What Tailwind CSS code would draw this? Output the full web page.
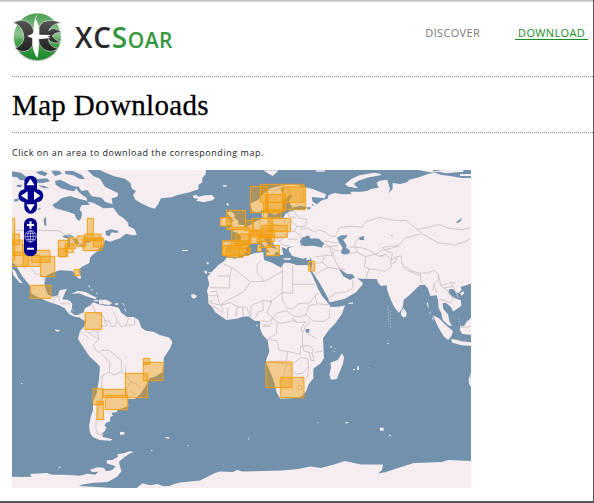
<!DOCTYPE html>
<html lang="en"><head><meta charset="utf-8"><title>XCSoar - Map Downloads</title>
<script src="https://cdn.jsdelivr.net/npm/@tailwindcss/browser@4"></script></head>
<body class="h-[503px] w-[594px] overflow-hidden bg-white">
<div class="flex h-[503px] w-[594px] flex-col border-r border-b-2 border-[#555] bg-white font-['Open_Sans',sans-serif]">
<div class="h-[2px] shrink-0 bg-linear-to-b from-[#bbb] to-[#ddd]"></div>
<header class="ml-3 flex h-[75px] shrink-0 items-start justify-between border-b border-dotted border-[#888] pr-[5px]">
<div class="flex pt-[10px]">
<svg class="h-[52px] w-[52px]" viewBox="12 12 156 156"><defs><linearGradient id="g" x2="0" y2="1"><stop stop-color="#4c9e50"/><stop offset=".45" stop-color="#8fc391"/><stop offset=".6" stop-color="#49a14e"/><stop offset="1" stop-color="#16862a"/></linearGradient><linearGradient id="k" x2="0" y2="1"><stop stop-color="#555"/><stop offset="1" stop-color="#202020"/></linearGradient></defs>
<ellipse cx="88" cy="90" rx="71" ry="70" fill="#bbb"/><circle cx="88" cy="86" r="70" fill="url(#g)"/>
<g fill="url(#k)" stroke="#d5e5d5" stroke-width="2"><path d="M16 44Q46 28 66 47Q75 56 78 72L79 97Q74 119 60 127Q41 136 21 121Q46 112 48 87Q45 53 16 44Z"/><path d="M91 75Q91 41 119 38Q143 35 158 45Q132 47 122 68Q137 53 161 73Q140 73 133 84Q140 96 158 102Q135 111 121 94Q125 118 150 121Q131 137 109 125Q91 112 91 95Z"/></g>
<path d="M89 17Q75 35 77 72L71 79L57 84L73 91Q70 124 88 151Q94 127 92 94L129 90L119 86L129 81L94 80Q96 52 83 34Z" fill="#fff"/></svg>
<div class="mt-[5px] ml-[11px] font-['Open_Sans'] text-[28px] leading-[40px] font-semibold tracking-[.8px] text-[#292929]">XC<span class="font-semibold tracking-[.5px] text-[#36963e]">S<span class="text-[21px]">OAR</span></span></div></div>
<nav class="flex gap-[35px] pt-[24px] text-[11px] leading-[13px] tracking-[.34px]"><a class="text-[#777]">DISCOVER</a><a class="border-b border-[#178c28] pr-[3px] pl-[3px] text-[#178c28]">DOWNLOAD</a></nav></header>
<h1 class="ml-3 flex h-[56px] shrink-0 items-center border-b border-dotted border-[#888] pt-[2px] font-['Liberation_Serif',serif] text-[29px] tracking-[.34px] text-black [-webkit-text-stroke:.3px_black]"><span>Map Downloads</span></h1>
<p class="ml-3 flex h-[37px] shrink-0 items-center pt-[2px] text-[9px] tracking-[.54px] text-[#222]"><span>Click on an area to download the corresponding map.</span></p>
<main class="ml-3 h-[318px] w-[459px] shrink-0"><svg class="block h-[318px] w-[459px] bg-[#7291ac]" viewBox="12 170 459 318">
<g fill="#f5edef">
<!-- North America -->
<g transform="translate(10 168) scale(.33333)">
<path d="M6 6H232L250 24L270 32L285 56L325 76L322 86L305 91L308 109L285 101L275 89L245 85L232 66L214 69L205 55L195 58L210 76L230 90L232 101L250 104L280 121L310 119L325 140L341 151L355 165L355 174L373 183L380 199L350 196L330 211L300 221L285 216L280 229L270 238L262 250L245 263L240 270L238 285L216 296L205 306L214 330L207 332L195 321L188 309L150 307L130 313L108 324L103 345L107 363L114 380L129 386L144 382L149 367L171 362L164 376L157 394L180 399L187 408L182 432L194 441L221 441L232 454L224 460L208 448L197 447L177 439L164 421L147 412L127 405L111 400L78 385L65 377L60 353L38 326L24 303L17 291L6 282Z"/>
<path d="M6 302L16 309L25 330L38 345L30 345L10 322Z"/><path d="M184 378L204 368L226 372L260 389L258 394L228 385L208 376ZM266 395L289 395L307 405L298 411L267 407ZM245 406L257 406L257 410L245 408ZM315 406h10v4h-10Z"/><path d="M236 352l3 7M244 363l4 5M258 374l6 5M338 405l5 8M344 421l3 9" stroke="#f5edef" stroke-width="2.5"/>
</g>
<g transform="translate(120 168) scale(.33333)"><path d="M-60 6H258L257 18L247 30L247 43L236 50L235 64L209 73L170 82L155 88L123 91L115 108L104 122L87 117L66 107L47 96L39 82L48 69L36 62L31 45L15 32L-20 24L-42 15Z"/><path d="M219 83L228 80L235 86L255 82L275 81L285 90L278 97L250 103L229 98L234 92L220 90ZM308 51l13 1v3l-10 2ZM320 104l6 3-1 8-5-4ZM18 180L45 188L50 201L37 202L7 195ZM253 307l7 3 2 7-8-1M265 313l8-1v4h-8M278 308l8-2-3 8-6 2M213 380l9-2 8 5-2 6-7 3-7-6M186 246h18v3h-18M260 283h6v6h-6Z"/></g>
<!-- South America -->
<g transform="translate(10 300) scale(.33333)"><path d="M138 0L174 -1L185 17L187 29L204 42L220 38L225 25L241 16L250 7L263 12L286 17L301 17L326 23L334 38L351 51L371 51L386 60L394 83L408 92L431 95L449 105L479 113L487 126L481 144L461 174L461 195L459 216L435 230L419 235L405 261L391 282L375 297L352 296L355 318L339 325L323 328L320 337L304 338L309 347L300 352L301 364L288 368L283 377L290 382L285 392L275 402L279 411L307 418L302 422L268 420L249 411L240 398L237 379L242 351L249 331L249 307L260 278L267 239L270 200L260 189L238 169L216 136L204 117L210 93L221 82L229 62L222 45L209 44L187 31L180 24L170 22L152 8Z"/><path d="M329 397l8-2 8 3-2 5-12 2ZM466 411l12 1v4l-10-1ZM135 87l8 3 7-1-4 6-9-2M33 249h4v3h-4M423 450h4v3h-4M147 500h4v4h-4ZM252 0h12v4h-12Z"/>
<path d="M6 530L35 531L65 530L60 522L110 519L126 524L168 524L208 527L232 521L256 524L265 515L246 516L240 509L263 502L281 503L289 514L307 510L317 499L290 490L291 481L307 480L324 470L322 463L342 460L358 454L372 456L358 461L340 474L327 485L329 495L334 514L323 529L304 540L293 546L253 548L220 553L207 558L310 564H6ZM380 564L397 550L420 556L442 552L460 559L500 557L515 564Z"/></g>
<!-- Africa -->
<g transform="translate(200 168) scale(.33333)"><path d="M81 268L105 272L132 265L166 255L190 253L192 276L216 284L243 299L252 285L267 284L292 292L329 291L331 310L342 334L355 364L366 383L386 408L392 417L415 416L435 412L426 437L406 466L386 487L369 511L372 571L362 586L342 601L340 607L340 631L325 650L319 668L306 684L286 690L241 692L231 676L218 629L201 590L198 577L208 551L203 517L188 500L180 480L180 459L164 458L145 445L128 446L110 452L79 456L65 446L46 433L36 417L25 406L24 382L21 369L28 348L22 327L40 307L55 291L72 280Z"/><path d="M426 556L432 568L429 588L410 633L393 635L388 620L393 597L391 584L413 576ZM445 405l14-2v4h-14ZM460 604l5-2v5h-5ZM472 601l5-2v7h-5ZM168 470h5v3h-5Z"/>
<path d="M436 763h5v3h-5M392 533h3v7h-3M401 548h3v3h-3M404 541h3v2h-3M353 763h3v2h-3M145 809h2v6h-2M-37 832h4v2h-4Z"/></g>
<!-- Europe and Asia -->
<g transform="translate(200 168) scale(.33333)">
<path d="M68 221L89 220L122 222L123 205L112 194L97 190L110 182L138 178L155 169L170 158L188 152L185 134L190 128L205 126L202 146L215 152L235 149L250 150L256 137L268 132L287 125L313 125L322 118L300 113L279 119L272 111L267 100L276 83L271 79L259 90L249 103L249 119L240 133L225 140L211 134L205 113L198 121L173 134L156 130L152 106L174 96L189 78L211 61L237 54L270 49L291 51L315 58L338 63L378 79L375 91L335 87L338 101L351 109L365 97L383 92L386 81L405 75L427 79L453 78L452 71L485 71L502 68L515 62L536 59L530 44L540 38L562 35L570 63L566 75L578 62L578 45L601 48L621 43L628 35L657 28L684 18L705 14L722 20L755 25L785 30L815 30V346L793 354L782 356L785 366L775 376L768 372L758 363L747 364L746 377L765 391L783 397L784 413L765 427L759 430L752 416L738 405L728 405L730 423L744 439L749 463L757 474L745 472L728 455L724 436L716 420L714 397L710 382L691 384L684 362L675 350L659 352L628 382L611 395L608 419L597 435L583 418L573 397L562 368L560 352L544 354L536 347L530 333L483 332L465 329L457 318L442 319L428 309L418 298L420 308L430 325L450 336L466 327L484 340L489 348L468 373L435 392L397 401L388 403L384 390L363 352L343 320L333 306L337 287L332 267L308 272L277 264L267 250L266 240L296 230L315 234L342 233L365 239L373 226L351 212L340 211L328 218L324 213L331 204L319 203L304 217L303 230L280 236L264 237L260 243L245 237L250 260L240 261L222 230L210 210L192 213L208 235L228 243L235 250L225 255L221 265L211 255L198 239L179 219L163 227L148 227L137 243L138 253L128 262L110 266L82 265L68 259Z"/>
<path d="M81 134L91 130L104 139L103 150L114 158L116 170L134 171L130 181L108 183L84 184L96 175L87 165L102 158L90 147ZM61 154L75 148L90 155L88 170L73 174L61 171ZM173 232l10-1v18h-9ZM197 253l23 1v11l-20-4ZM251 271l21-1v5h-20ZM320 270l14-5-5 10-10 1Z"/>
<path d="M435 49L455 32L478 22L522 14L541 17L543 22L507 28L475 38L461 48L475 61L445 56ZM190 7H236L218 24L207 18ZM348 7H375V11H348ZM655 6L700 6V11L725 6H790V11L738 16L715 11L698 14ZM780 18H813V24H780Z"/>
<path d="M604 428l7-7 9 13-2 12-9 2-6-8ZM680 405l4-1 2 15-3-1M687 430l5 4-1 6M695 448l5 3v7ZM698 442L717 451L743 476L759 489L754 505L745 516L732 506L716 480ZM753 513L771 515L783 520L813 523V534L785 532L757 524ZM781 474L792 475L798 463L813 450V501L787 498L779 485ZM780 376l10-6 3 6-8 7ZM812 615L813 657L807 648L806 634Z"/>
<path d="M539 779h12v9h-10ZM567 800h5v4h-5M438 762h6v4h-6M562 525h4v3h-4M472 594h4v8h-4M508 598h2v3h-2Z"/>
<path d="M565 415v55M571 430v50M775 451l5 10 5 25M796 517l9-3" fill="none" stroke="#e4e8ed" stroke-width="2" stroke-dasharray="3 6"/></g>
<!-- Antarctica -->
<path d="M174 484L180 482.500L200 480.500L207 477L215 473L220 471.500L233 472L237 470L243 471.500L282 470.500L298 469L310 466.500L321 468L334 464.500L345 461L354 463L361 464.500L383 464.500L382 470L378 473.500L386 472L398 468L414 463L442 462L448 460L471 461V488H165Z"/></g>
<!-- Inland waters -->
<g fill="#7291ac" transform="translate(10 168) scale(.33333)">
<path d="M127 110L141 102L154 91L180 84L205 92L231 98L239 110L214 112L209 125L216 134L214 151L207 159L198 151L194 139L174 131L155 126L136 121ZM6 10L33 14L48 26L70 24L83 33L111 31L120 40L99 45L76 44L54 36L31 37L20 27L6 26ZM135 39L151 35L166 43L186 53L200 56L193 70L174 67L153 61L137 50ZM78 12L95 8L113 16L105 25L87 19ZM125 8L148 8L156 17L136 24L128 16ZM165 9L189 9L215 21L225 34L208 32L190 22L166 18ZM84 52L103 54L118 61L100 60ZM14 93L32 91L23 100L12 101ZM20 51L37 50L32 58L21 56ZM56 128L67 122L62 132ZM83 122L94 119L85 127ZM101 152L108 147L109 174L103 172ZM157 204L178 199L192 206L180 211L162 209ZM176 213L181 211L179 238L173 237ZM187 212L201 213L208 225L196 231ZM203 235L223 227L224 232L209 237ZM221 221L241 218L242 222L224 226ZM286 190L302 184L326 189L322 195L305 193L298 205L288 202Z"/></g>
<g fill="#7291ac" transform="translate(200 168) scale(.33333)"><path d="M299 220L309 207L326 207L336 213L357 212L370 225L362 233L337 230L318 233L304 230ZM411 209L424 202L443 202L437 210L429 215L439 230L439 240L449 246L449 257L433 260L422 254L428 239L418 225ZM477 208L492 204V216L479 216ZM242 62L249 56L253 68L244 72ZM317 483L329 483L327 495L317 492ZM768 163L785 150L783 158L773 166ZM323 118l9-1-2 7h-9M334 107l8 3-3 5M572 203l8-3-6 5M210 398l6 1-4 6Z"/></g>
<!-- Country borders -->
<g fill="none" stroke="#d1c2c6" stroke-width="2.700" stroke-linejoin="round">
<g transform="translate(10 168) scale(.33333)"><path d="M6 187L146 188L166 200L191 210L198 231L229 225L245 211L260 210L272 201L280 217M18 290L45 299L58 293L77 319L93 318L106 341M130 400L136 388L147 384L148 400M151 407L179 408M175 436L184 433M276 397v10"/></g>
<g transform="translate(10 300) scale(.33333)"><path d="M247 13L258 40L280 48L291 78L273 78L263 101L267 119L240 101L225 90M210 92L236 115M267 119L250 133L257 151L268 158L274 151L298 151L334 181L335 215L312 225L297 216L286 222L270 235M298 216L300 187L272 160M335 215L347 224L362 246L348 268L354 289M280 221L274 247L278 286L267 321L259 350L258 385L263 402L282 404M280 61L300 64L303 80L316 78L322 61L310 35M322 61L334 80L347 77L356 54M347 77L374 73L374 52M240 101L250 91L265 97M348 194L346 221M363 245L385 256L390 262M362 274L377 285"/></g>
<g transform="translate(200 168) scale(.33333)"><path d="M69 287L96 299L89 324L54 324M89 324L89 360L30 359M96 299L151 341L132 371L78 399L60 411L29 404M30 371L50 370L56 399M151 341L194 340L248 309L246 294M248 309L246 374L215 399L188 398L154 412L152 446M278 293L278 349L343 349M278 349V376L246 374M182 277L171 289L172 316L194 340M246 374L247 395L259 420L277 423L298 407L329 405L345 383L354 375M345 383L351 407L388 411M352 408L327 413L318 440L297 447L277 443L260 428L230 435L218 449L201 436L215 399M318 440L339 459L372 460L389 449L388 424M152 447L140 418L112 416L91 404L60 412M112 416L107 448M128 417L130 444M84 420L82 451M56 399L68 423L66 441M180 458L205 461L218 449L231 462L230 496L203 515L231 518L238 548L262 550L260 579L204 580M206 581L260 588L251 620L243 644M260 588L275 590L303 568L324 573L326 593L308 616L288 618L271 598M262 550L301 559L301 535L328 532L340 543L338 555L313 550L307 531L308 495L317 474L332 461M318 495L347 510M308 495L302 483L316 461M326 593L325 620L320 632M327 553L333 577L342 578L337 555M347 553L370 548M300 667l-9-7 6-9 9 4-3 11M25 383L56 383M26 400L39 398M37 414L54 422L58 432M219 450L208 472L189 470M188 475H213M273 449L294 464L316 461M294 464L278 458L243 466L231 462M188 398L190 427L174 432L166 450"/>
<path d="M93 219L89 259M120 222L149 228M140 180L154 189L180 190M181 150L178 179L197 185L219 181L229 171L253 175L275 159L291 175L283 190L263 194L255 209L230 212L216 202L190 207M210 151V166L228 171M252 150L256 167M281 128L296 150L321 154L315 176L288 175M266 130V145L287 149M301 184L322 181L343 191L357 186L378 193L389 204L410 205M283 190L300 200L304 217M265 214L293 213M237 220L250 232L280 236M230 212L237 220L251 211M371 227L393 237L404 247L417 248M371 237L389 237L397 264L379 262L345 267M372 265L367 284L344 286L343 310M367 284L385 298L406 302L435 305M345 320L365 308L385 298M386 390L405 376L440 372L459 359L458 337M397 249L408 284L423 307M433 260L471 252L497 266L493 295L507 303L498 330M449 237L483 239L504 245L537 265L553 263M471 252L464 228L478 207M410 196L419 178L460 175L486 178L499 160L540 148L586 158L618 157L652 184L665 197L614 211L597 232L547 238L555 246L598 234M555 247L577 256L573 275L590 266L604 264L606 288L634 309L661 316L687 314L702 306L715 318L715 337L702 349L698 367M652 184L679 179L717 170L747 181L788 185L813 178M665 197L714 224L763 231L791 223L813 211M497 266L531 257L551 243M537 265L558 259L572 274L574 297L555 310L530 305L507 303M590 266L588 281L575 288M661 316L664 345M607 296L622 307L660 323L661 314M715 318L722 352L740 348L752 343L767 346M702 349L710 375M722 352L743 368L759 393L751 405L728 397M736 396L716 396M752 343L763 362L775 390M730 360L757 356M372 219L397 223L418 226M391 235L415 233M780 479L813 476"/>
<path d="M191 135L198 112L207 89L227 67L255 54L267 60L299 57M270 78L263 60M268 132L279 119L292 109"/></g></g>
<!-- Downloadable areas -->
<g fill="#ee9c07" fill-opacity=".43" stroke="#f4a012" stroke-width="3">
<g transform="translate(10 168) scale(.33333)"><path d="M-9 151H14V230H-9Z"/><path d="M0 198H28V230H0Z"/><path d="M0 216H38V262H0Z"/><path d="M0 252H55V295H0Z"/><path d="M14 217V278H0V217Z"/><path d="M38 230H66V262H38Z"/><path d="M39 262H90V295H39Z"/><path d="M65 247H120V283H65Z"/><path d="M92 265H134V326H92Z"/><path d="M61 352H123V391H61Z"/><path d="M194 304H210V323H194Z"/><path d="M145 217H172V266H145Z"/><path d="M145 241H170V266H145Z"/><path d="M165 228H190V254H165Z"/><path d="M173 210H198V242H173Z"/><path d="M202 204H227V236H202Z"/><path d="M232 151H250V217H232Z"/><path d="M224 198H272V218H224Z"/><path d="M219 212H275V248H219Z"/><path d="M250 210H281V237H250Z"/></g>
<g transform="translate(10 300) scale(.33333)"><path d="M225 38H275V88H225Z"/><path d="M400 175H419V193H400Z"/><path d="M400 187H459V242H400Z"/><path d="M346 220H413V293H346Z"/><path d="M279 268H348V292H279Z"/><path d="M286 286H353V329H286Z"/><path d="M249 265H278V314H249Z"/><path d="M261 304H281V359H261Z"/></g>
<g transform="translate(180 290) scale(.33333)"><path d="M258 216H336V293H258Z"/><path d="M301 262H372V323H301Z"/></g>
<g transform="translate(200 168) scale(.33333)"><path d="M151 55H203V134H151Z"/><path d="M181 49H312V103H181Z"/><path d="M247 57H317V125H247Z"/><path d="M197 79H256V130H197Z"/><path d="M190 103H247V134H190Z"/><path d="M190 125H242V150H190Z"/><path d="M61 149H95V174H61Z"/><path d="M80 127H137V185H80Z"/><path d="M136 157H160V188H136Z"/><path d="M95 178H150V228H95Z"/><path d="M157 151H217V200H157Z"/><path d="M205 151H272V190H205Z"/><path d="M185 172H262V208H185Z"/><path d="M155 186H223V207H155Z"/><path d="M108 198H152V230H108Z"/><path d="M147 188H180V226H147Z"/><path d="M172 203H224V221H172Z"/><path d="M67 218H147V262H67Z"/><path d="M67 233H120V262H67Z"/><path d="M78 240H129V268H78Z"/><path d="M82 232H140V242H82Z"/><path d="M130 240H152V254H130Z"/><path d="M172 238H184V250H172Z"/><path d="M178 210H215V238H178Z"/><path d="M199 232H238V263H199Z"/><path d="M325 280H344V309H325Z"/></g></g>
<!-- Pan and zoom controls -->
<g transform="translate(10 168) scale(.33333)"><g fill="#00008b"><rect x="43" y="23" width="38" height="114" rx="19"/><rect x="25" y="64" width="75" height="38" rx="19"/><rect x="42" y="150" width="39" height="115" rx="18"/></g><path d="M61 32L74 52H49ZM61 130L49 109H74ZM33 83L53 70V96ZM91 83L72 70V96Z" fill="#fff"/><path d="M51 171H72M61.500 160V182M51 242H72" stroke="#fff" stroke-width="6"/><g fill="none" stroke="#d5d5f0" stroke-width="2"><circle cx="61.500" cy="205" r="17"/><ellipse cx="61.500" cy="205" rx="8" ry="17"/><path d="M45 205H78M48 196H75M48 214H75M61.500 188V222"/></g></g>
</svg></main>
</div></body></html>
